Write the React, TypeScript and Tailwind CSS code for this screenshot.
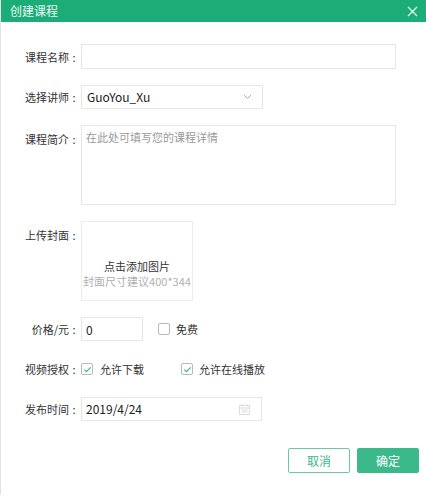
import { useState } from "react";

const FONT = { fontFamily: '"Noto Sans CJK SC", "Noto Sans", sans-serif' };

/* ---------- small pieces ---------- */
function Label({ text, top = false }: { text: string; top?: boolean }) {
  return (
    <div
      className={`flex w-[80px] shrink-0 justify-end pr-[2px] text-[11px] leading-[16px] text-[#333] ${
        top ? "pt-[6px]" : ""
      }`}
    >
      <span>{text}</span>
      <span className="w-[10px] text-center">:</span>
    </div>
  );
}

function Check({ checked }: { checked: boolean }) {
  return (
    <span className="flex h-[12px] w-[12px] items-center justify-center rounded-[2px] border border-[#b9b9b9] bg-white">
      {checked ? (
        <svg width="9" height="9" viewBox="0 0 10 10" fill="none" aria-hidden>
          <path d="M1.5 5.2l2.3 2.3L8.6 2.6" stroke="#3cb58a" strokeWidth="1.3" />
        </svg>
      ) : null}
    </span>
  );
}

function Chevron() {
  return (
    <svg width="9" height="6" viewBox="0 0 9 6" fill="none" aria-hidden>
      <path d="M1 1l3.5 3.5L8 1" stroke="#9fb9ad" strokeWidth="1" />
    </svg>
  );
}

function CalendarIcon() {
  return (
    <svg width="11" height="11" viewBox="0 0 11 11" fill="none" aria-hidden>
      <rect x="0.5" y="1.5" width="10" height="9" stroke="#dcdcdc" />
      <path d="M0.5 4h10M3 0v2.5M8 0v2.5M2.5 6h6M2.5 8h6" stroke="#dcdcdc" />
    </svg>
  );
}

/* ---------- App ---------- */
export default function App() {
  const [name, setName] = useState("");
  const [price, setPrice] = useState("0");

  return (
    <div style={FONT} className="h-[500px] w-[426px] bg-white">
      <div className="flex h-[495px] flex-col border-l border-[#e3e3e3]">
        {/* header */}
        <div className="flex h-[22px] shrink-0 items-center justify-between bg-[#1bac78] pl-[9px] pr-[8px]">
          <span className="text-[12px] text-white/90">创建课程</span>
          <svg width="11" height="11" viewBox="0 0 11 11" fill="none" aria-hidden>
            <path d="M1 1l9 9M10 1l-9 9" stroke="#e8fff5" strokeWidth="1.3" />
          </svg>
        </div>

        <div className="flex flex-col gap-[16px] pt-[22px]">
          {/* 课程名称 */}
          <div className="flex items-center">
            <Label text="课程名称" />
            <input
              value={name}
              onChange={(e) => setName(e.target.value)}
              className="h-[25px] w-[315px] border border-[#e6e6e6] bg-white px-[5px] text-[12px] outline-none"
            />
          </div>

          {/* 选择讲师 */}
          <div className="flex items-center">
            <Label text="选择讲师" />
            <div className="flex h-[24px] w-[182px] items-center justify-between border border-[#e6e6e6] pl-[5px] pr-[10px]">
              <span className="text-[12px] text-[#222]">GuoYou_Xu</span>
              <Chevron />
            </div>
          </div>

          {/* 课程简介 */}
          <div className="flex items-start">
            <Label text="课程简介" top />
            <textarea
              placeholder="在此处可填写您的课程详情"
              className="h-[80px] w-[315px] resize-none border border-[#e6e6e6] px-[4px] py-[3px] text-[11px] leading-[16px] outline-none placeholder:text-[#9a9a9a]"
            />
          </div>

          {/* 上传封面 */}
          <div className="flex items-start">
            <Label text="上传封面" top />
            <div className="flex h-[80px] w-[112px] flex-col items-center gap-[1px] border border-[#ececec] pt-[37px] text-[11px] leading-[14px]">
              <span className="text-[#333]">点击添加图片</span>
              <span className="text-[#b0b0b0]">封面尺寸建议400*344</span>
            </div>
          </div>

          {/* 价格 */}
          <div className="flex items-center">
            <Label text="价格/元" />
            <input
              value={price}
              onChange={(e) => setPrice(e.target.value)}
              className="h-[24px] w-[62px] border border-[#e6e6e6] px-[4px] text-[12px] text-[#222] outline-none"
            />
            <div className="ml-[15px] flex items-center gap-[6px]">
              <Check checked={false} />
              <span className="text-[11px] text-[#333]">免费</span>
            </div>
          </div>

          {/* 视频授权 */}
          <div className="flex h-[24px] items-center">
            <Label text="视频授权" />
            <div className="flex items-center gap-[7px]">
              <Check checked />
              <span className="text-[11px] text-[#333]">允许下载</span>
            </div>
            <div className="ml-[37px] flex items-center gap-[6px]">
              <Check checked />
              <span className="text-[11px] text-[#333]">允许在线播放</span>
            </div>
          </div>

          {/* 发布时间 */}
          <div className="flex items-center">
            <Label text="发布时间" />
            <div className="flex h-[24px] w-[181px] items-center justify-between border border-[#e6e6e6] pl-[4px] pr-[11px]">
              <span className="text-[12px] text-[#222]">2019/4/24</span>
              <CalendarIcon />
            </div>
          </div>
        </div>

        {/* buttons */}
        <div className="mt-[27px] flex justify-end gap-[7px] pr-[7px]">
          <button className="h-[25px] w-[62px] rounded-[2px] border border-[#6cc9a3] bg-white text-[12px] text-[#3cb58a]">
            取消
          </button>
          <button className="h-[25px] w-[62px] rounded-[2px] bg-[#3cb98a] text-[12px] text-white">
            确定
          </button>
        </div>
      </div>
    </div>
  );
}
